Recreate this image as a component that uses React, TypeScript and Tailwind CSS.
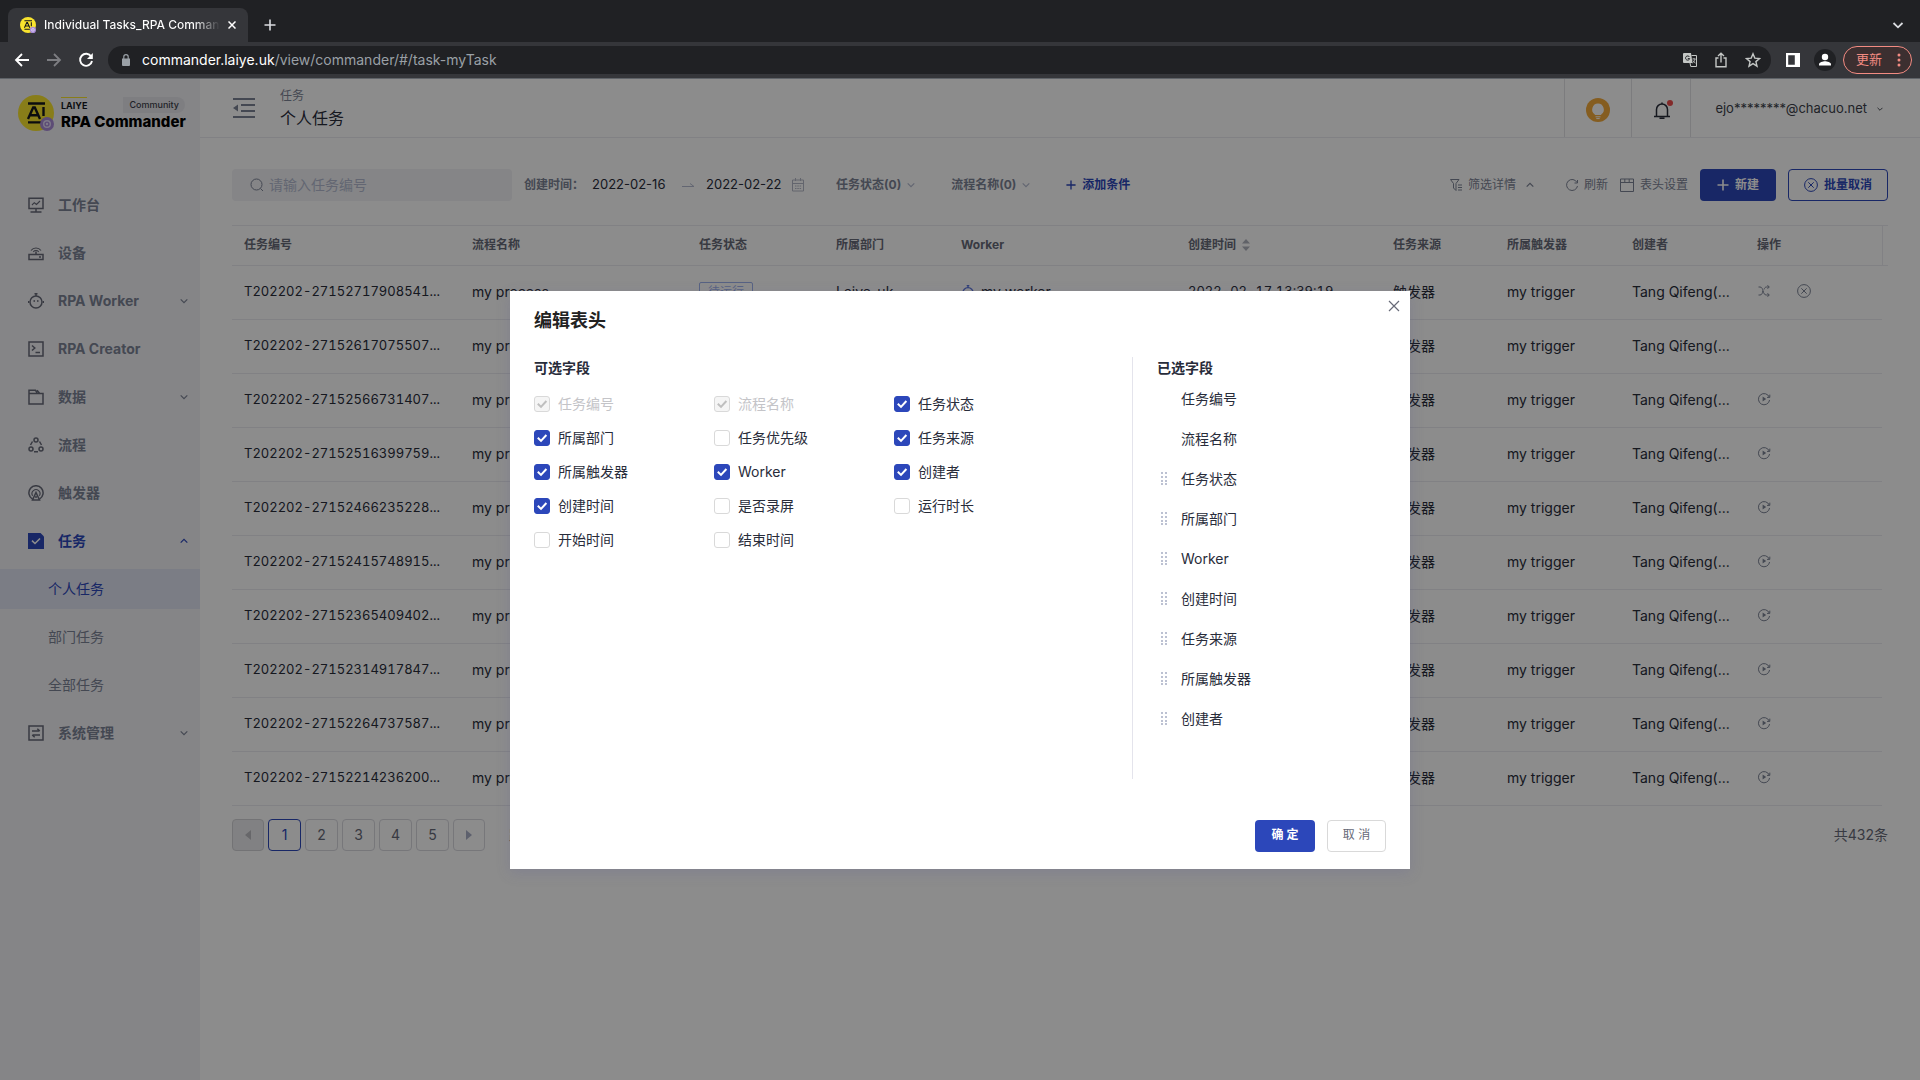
import React from "react";

type IconProps = { className?: string };

const Logo = ({ className }: IconProps) => (
  <svg viewBox="0 0 36 36" className={className} aria-hidden="true">
    <circle cx="18" cy="18" r="18" fill="#f8e32e" />
    <g stroke="#15171c" strokeWidth="2.4" fill="none">
      <path d="M10 8.500h17M10 27.400h13" />
      <path d="M10 24l5.200-11.500h1.600L22 24M12 20.200h8.500" />
      <path d="M25.500 12v9" />
    </g>
    <circle cx="29" cy="29" r="7" fill="#a98bd8" />
    <circle cx="29" cy="29" r="3.300" fill="none" stroke="#e6dcf8" strokeWidth="1.400" />
    <circle cx="29" cy="29" r="1.200" fill="#e6dcf8" />
  </svg>
);

const Chevron = ({ className, up }: IconProps & { up?: boolean }) => (
  <svg viewBox="0 0 8 8" className={className} fill="none" stroke="currentColor" strokeWidth="1.200" aria-hidden="true">
    <path d={up ? "M0.700 5.600L4 2.300l3.300 3.300" : "M0.700 2.400L4 5.700l3.300-3.300"} />
  </svg>
);

const Plus = ({ className }: IconProps) => (
  <svg viewBox="0 0 12 12" className={className} fill="none" stroke="currentColor" strokeWidth="1.600" aria-hidden="true">
    <path d="M6 0.500v11M0.500 6h11" />
  </svg>
);

const CircleX = ({ className }: IconProps) => (
  <svg viewBox="0 0 14 14" className={className} fill="none" stroke="currentColor" strokeWidth="1" aria-hidden="true">
    <circle cx="7" cy="7" r="6.400" />
    <path d="M4.300 4.300l5.400 5.400M9.700 4.300L4.300 9.700" />
  </svg>
);

const Replay = ({ className }: IconProps) => (
  <svg viewBox="0 0 14 14" className={className} fill="none" stroke="currentColor" strokeWidth="1" aria-hidden="true">
    <path d="M12.300 5.200A5.600 5.600 0 1 0 12.600 8" />
    <path d="M12.800 2.600v2.800H10" />
    <path d="M5.600 4.600v4.800L9.200 7z" fill="currentColor" stroke="none" />
  </svg>
);

const Shuffle = ({ className }: IconProps) => (
  <svg viewBox="0 0 14 14" className={className} fill="none" stroke="currentColor" strokeWidth="1" aria-hidden="true">
    <path d="M1.500 3H3c4 0 2 8 6.500 8H12M1.500 11H3c2 0 2.300-2 2.900-4M7 5.500C7.600 4 8.200 3 9.500 3H12" />
    <path d="M10.500 1.200L12.300 3l-1.800 1.800M10.500 9.200l1.800 1.800-1.800 1.800" />
  </svg>
);

const Bot = ({ className }: IconProps) => (
  <svg viewBox="0 0 16 16" className={className} fill="none" stroke="currentColor" strokeWidth="1.500" aria-hidden="true">
    <circle cx="8" cy="9" r="6" />
    <path d="M8 3V0.500M6.500 0.800h3M0.500 8v2M15.500 8v2" />
    <path d="M6.200 7v2M9.800 7v2" strokeWidth="1.200" />
  </svg>
);

const navIcons: Record<string, React.ReactNode> = {
  desk: (
    <>
      <path d="M1 1.200h14v10.300H1zM8 11.500v3M2.500 15h11" />
      <path d="M4 8l2.300-2.300L8.500 7.500 12 4" strokeWidth="1.100" />
    </>
  ),
  device: (
    <>
      <path d="M1 9.500h14v5H1z" />
      <path d="M11 12h2M8 9V6.500" />
      <path d="M3 5.500a6.200 6.200 0 0 1 10 0M5.300 6.800a3.500 3.500 0 0 1 5.400 0" strokeWidth="1.100" />
    </>
  ),
  creator: <path d="M1 1h14v14H1zM4 4.500L6.800 7 4 9.500M7.500 11.500H12" />,
  data: <path d="M1 15V1.200h6.500l1.800 3.300H15V15zM1 4.600h8M9 1.200l2.500 3" />,
  flow: (
    <>
      <circle cx="8" cy="3" r="2" />
      <circle cx="3" cy="12" r="2" />
      <circle cx="13" cy="12" r="2" />
      <path d="M4.500 4.500L2.500 8M11.500 4.500l2 3.500M6 14.800h4" />
    </>
  ),
  trigger: (
    <>
      <path d="M4.500 14A7.100 7.100 0 1 1 11.500 14" />
      <path d="M4.600 10.800a4 4 0 1 1 6.800 0" strokeWidth="1.100" />
      <path d="M8 7.500l3.500 7.500h-7zM8 11v2" />
    </>
  ),
  system: <path d="M1 1h14v14H1zM4 6h7.500M9.300 3.800L11.800 6M12 10H4.500M6.700 12.200L4.200 10" />,
};

const NavIcon = ({ name }: { name: string }) => {
  if (name === "bot") return <Bot className="size-4 shrink-0" />;
  if (name === "task")
    return (
      <svg viewBox="0 0 16 16" className="size-4 shrink-0" aria-hidden="true">
        <path d="M0 0h12.500L16 3.500V16H0z" fill="currentColor" />
        <path d="M4 7.600l3 2.900 5-5" fill="none" stroke="#fff" strokeWidth="1.600" />
      </svg>
    );
  return (
    <svg viewBox="0 0 16 16" className="size-4 shrink-0" fill="none" stroke="currentColor" strokeWidth="1.500" aria-hidden="true">
      {navIcons[name]}
    </svg>
  );
};

function BrowserChrome() {
  return (
    <header className="border-b border-[#5f6368] bg-[#35363a]">
      <div className="flex h-[42px] items-end bg-[#202124] pl-2">
        <div className="flex h-[34px] w-60 items-center rounded-t-lg bg-[#35363a] pl-3 pr-3">
          <Logo className="size-4 shrink-0" />
          <span className="ml-2 flex-1 overflow-hidden whitespace-nowrap bg-linear-to-r from-white from-85% to-transparent bg-clip-text text-xs font-medium text-transparent">
            Individual Tasks_RPA Commander
          </span>
          <button aria-label="Close tab" className="ml-2 text-white">
            <svg viewBox="0 0 8 8" className="size-2" stroke="currentColor" strokeWidth="1.500" aria-hidden="true">
              <path d="M0.500 0.500l7 7M7.500 0.500l-7 7" />
            </svg>
          </button>
        </div>
        <button aria-label="New tab" className="ml-4 flex h-[34px] items-center text-[#dadce0]">
          <Plus className="size-3" />
        </button>
        <button aria-label="Search tabs" className="ml-auto mr-4 flex h-[34px] items-center text-[#dadce0]">
          <svg viewBox="0 0 12 12" className="size-3" fill="none" stroke="currentColor" strokeWidth="1.800" aria-hidden="true">
            <path d="M1.500 4L6 8.300 10.500 4" />
          </svg>
        </button>
      </div>
      <div className="flex h-9 items-center pl-3.5 pr-2">
        <button aria-label="Back" className="text-white">
          <svg viewBox="0 0 16 16" className="size-4" fill="none" stroke="currentColor" strokeWidth="1.800" aria-hidden="true">
            <path d="M15 8H2M8 2L2 8l6 6" />
          </svg>
        </button>
        <button aria-label="Forward" className="ml-4 text-[#7d7e82]">
          <svg viewBox="0 0 16 16" className="size-4" fill="none" stroke="currentColor" strokeWidth="1.800" aria-hidden="true">
            <path d="M1 8h13M8 2l6 6-6 6" />
          </svg>
        </button>
        <button aria-label="Reload" className="ml-4 text-white">
          <svg viewBox="0 0 16 16" className="size-4" fill="none" stroke="currentColor" strokeWidth="1.900" aria-hidden="true">
            <path d="M13.200 4.600A6 6 0 1 0 14 9" />
            <path d="M14.800 1v6H9z" fill="currentColor" stroke="none" />
          </svg>
        </button>
        <div className="ml-3.5 flex h-7 flex-1 items-center rounded-full bg-[#202124] pl-3.5 pr-2.5">
          <svg viewBox="0 0 8 12" className="h-3 w-2" aria-hidden="true">
            <path d="M0 4.500h8V11a1 1 0 0 1-1 1H1a1 1 0 0 1-1-1z" fill="#9aa0a6" />
            <path d="M1.800 5V2.800a2.200 2.200 0 0 1 4.400 0V5" fill="none" stroke="#9aa0a6" strokeWidth="1.200" />
          </svg>
          <span className="ml-3 text-sm text-[#9aa0a6]">
            <span className="text-white">commander.laiye.uk</span>/view/commander/#/task-myTask
          </span>
          <div className="ml-auto flex items-center gap-[17px] text-[#c4c7c5]">
            <svg viewBox="0 0 14 14" className="size-3.5" aria-hidden="true">
              <path d="M1 0h7l1.500 10H1a1 1 0 0 1-1-1V1a1 1 0 0 1 1-1z" fill="currentColor" />
              <path d="M8.500 2.500h5v11H7.800L7 10" fill="none" stroke="currentColor" />
              <path d="M6.500 4A2.100 2.100 0 1 0 6.700 5.600H4.800" fill="none" stroke="#202124" />
              <path d="M9.300 6h3.400M11 5v1M12 6c-.4 2-1.400 3.200-2.600 4M9.900 7.500c.6 1.200 1.500 2 2.600 2.600" fill="none" stroke="currentColor" strokeWidth="0.800" />
            </svg>
            <svg viewBox="0 0 14 16" className="h-4 w-3.5" fill="none" stroke="currentColor" strokeWidth="1.400" aria-hidden="true">
              <path d="M4.500 6H2v8.800h10V6H9.500M7 10.500V1.500M4 4l3-2.800L10 4" />
            </svg>
            <svg viewBox="0 0 16 16" className="size-4" fill="none" stroke="currentColor" strokeWidth="1.400" aria-hidden="true">
              <path d="M8 1.800l1.800 4.300 4.700.4-3.600 3.100 1.100 4.600L8 11.700l-4 2.500 1.100-4.600L1.500 6.500l4.700-.4z" />
            </svg>
          </div>
        </div>
        <svg viewBox="0 0 14 14" className="ml-[15px] size-3.5" aria-hidden="true">
          <path d="M0 0h14v14H0zM2.200 2.200v9.600h6.600V2.200z" fill="#fff" fillRule="evenodd" />
        </svg>
        <svg viewBox="0 0 22 22" className="ml-3.5 size-[22px]" aria-hidden="true">
          <circle cx="11" cy="11" r="11" fill="#202124" />
          <circle cx="11" cy="8" r="3.200" fill="#fff" />
          <path d="M5 16.500v-1.300c0-2 4-3 6-3s6 1 6 3v1.300z" fill="#fff" />
        </svg>
        <button className="ml-[7px] flex h-7 w-[69px] items-center justify-between rounded-full border border-[#f28b82] bg-[#3c2f30] pl-3 pr-2.5 text-[13px] text-[#f28b82]">
          更新
          <svg viewBox="0 0 4 14" className="h-3.5 w-1" fill="currentColor" aria-hidden="true">
            <circle cx="2" cy="2" r="1.500" />
            <circle cx="2" cy="7" r="1.500" />
            <circle cx="2" cy="12" r="1.500" />
          </svg>
        </button>
      </div>
    </header>
  );
}

const navItems = [
  { icon: "desk", label: "工作台" },
  { icon: "device", label: "设备" },
  { icon: "bot", label: "RPA Worker", more: true },
  { icon: "creator", label: "RPA Creator" },
  { icon: "data", label: "数据", more: true },
  { icon: "flow", label: "流程" },
  { icon: "trigger", label: "触发器" },
  { icon: "task", label: "任务", more: true, children: ["个人任务", "部门任务", "全部任务"] },
  { icon: "system", label: "系统管理", more: true },
];

function Sidebar() {
  return (
    <aside className="w-[200px] shrink-0 bg-[#f2f2f6]">
      <div className="flex h-[58px] items-center gap-[7px] pl-[18px] pt-2.5">
        <Logo className="size-9 shrink-0" />
        <div className="w-[124px]">
          <div className="flex items-center justify-between">
            <span className="border-t border-[#f8e32e] text-[9px]/4 font-bold text-[#15171c]">LAIYE</span>
            <span className="rounded-l-sm rounded-r-full bg-[#e6e6ec] px-1.5 text-[9px]/4 font-medium text-[#3c3f4a]">
              Community
            </span>
          </div>
          <div className="whitespace-nowrap text-[15px]/4 font-extrabold text-black">RPA Commander</div>
        </div>
      </div>
      <nav className="mt-12 flex flex-col gap-2">
        {navItems.map((n) => (
          <React.Fragment key={n.label}>
            <a
              href="#"
              className={
                n.children
                  ? "flex h-10 items-center pl-7 pr-3 text-sm font-bold text-[#2c47ba]"
                  : "flex h-10 items-center pl-7 pr-3 text-sm font-bold text-[#7d8496]"
              }
            >
              <span className={n.children ? "flex" : "flex text-[#676a78]"}>
                <NavIcon name={n.icon} />
              </span>
              <span className="ml-3.5">{n.label}</span>
              {n.more && <Chevron up={!!n.children} className="ml-auto size-2" />}
            </a>
            {n.children?.map((c, i) => (
              <a
                key={c}
                href="#"
                className={
                  i === 0
                    ? "flex h-10 items-center bg-[#e1e4f2] pl-12 text-sm text-[#2c47ba]"
                    : "flex h-10 items-center pl-12 text-sm text-[#7d8496]"
                }
              >
                {c}
              </a>
            ))}
          </React.Fragment>
        ))}
      </nav>
    </aside>
  );
}

function TopBar() {
  return (
    <div className="flex h-[59px] border-b border-[#ececf0]">
      <button aria-label="收起菜单" className="ml-8 text-[#7d8496]">
        <svg viewBox="0 0 24 20" className="h-5 w-6" fill="none" stroke="currentColor" strokeWidth="1.800" aria-hidden="true">
          <path d="M1 1h22M9 7h14M9 13h14M1 19h22" />
          <path d="M1 10l5-3.500v7z" fill="currentColor" stroke="none" />
        </svg>
      </button>
      <div className="ml-6 flex flex-col pt-[9px]">
        <span className="text-xs/4 text-[#7d8496]">任务</span>
        <h1 className="mt-0.5 text-base/6 text-[#282c3a]">个人任务</h1>
      </div>
      <div className="ml-auto flex">
        <button aria-label="帮助" className="flex w-[67px] items-center justify-center border-l border-[#e2e2e6]">
          <svg viewBox="0 0 24 24" className="mt-1 size-6" aria-hidden="true">
            <circle cx="12" cy="12" r="12" fill="#f2a93b" />
            <path d="M12 5.500a6 6 0 0 0-3.400 10.800l.8 1.700h5.200l.8-1.700A6 6 0 0 0 12 5.500z" fill="#fff" />
            <path d="M9.500 18.800h5M10.300 20.600h3.400" stroke="#fff" strokeWidth="1" />
            <path d="M9 17.500h6" stroke="#f2a93b" strokeWidth="1" />
          </svg>
        </button>
        <button aria-label="通知" className="flex w-[59px] items-center justify-center border-l border-[#e2e2e6]">
          <svg viewBox="0 0 22 22" className="mt-1 ml-1 size-[22px]" aria-hidden="true">
            <path d="M4.500 17V10.500a5.500 5.500 0 0 1 11 0V17M2 17.500h16M7.500 19.200h5M10 5V3.500" fill="none" stroke="#282c3a" strokeWidth="1.500" />
            <circle cx="18" cy="4" r="3" fill="#ee4d4d" />
          </svg>
        </button>
        <button className="flex items-center gap-2.5 border-l border-[#e2e2e6] pl-6 pr-[37px] pt-0.5 text-[13px] text-[#3c3f4a]">
          ejo********@chacuo.net
          <Chevron className="size-1.5" />
        </button>
      </div>
    </div>
  );
}

function FilterBar() {
  return (
    <div className="flex h-8 items-center text-xs text-[#7d8496]">
      <label className="flex h-8 w-[280px] items-center rounded-sm bg-[#f2f2f6] pl-[18px]">
        <svg viewBox="0 0 14 14" className="size-3.5" fill="none" stroke="currentColor" aria-label="搜索">
          <circle cx="6.500" cy="6.500" r="5.500" />
          <path d="M10.500 10.500l2.500 2.500" />
        </svg>
        <input
          type="text"
          placeholder="请输入任务编号"
          className="ml-[5px] min-w-0 flex-1 bg-transparent text-sm outline-none placeholder:text-[#b4bbd0]"
        />
      </label>
      <label htmlFor="from" className="ml-3 font-bold">创建时间：</label>
      <input id="from" type="text" defaultValue="2022-02-16" className="ml-2 w-[78px] bg-transparent text-[13px] text-[#282c3a]" />
      <svg viewBox="0 0 12 12" className="ml-3 size-3" fill="none" stroke="#b4bbd0" aria-hidden="true">
        <path d="M0 7.500h12L8 4.500" />
      </svg>
      <input aria-label="结束日期" type="text" defaultValue="2022-02-22" className="ml-3 w-[78px] bg-transparent text-[13px] text-[#282c3a]" />
      <svg viewBox="0 0 12 14" className="ml-2 h-3.5 w-3" fill="none" stroke="#b4b8c6" aria-hidden="true">
        <path d="M0.500 2h11v11h-11zM0.500 5.500h11M3.500 0v3M8.500 0v3M3 8h1.500M5.300 8h1.500M7.600 8h1.500M3 10.500h1.500M5.300 10.500h1.500M7.600 10.500h1.500" />
      </svg>
      <button className="ml-8 flex items-center gap-1.5 font-bold">
        任务状态(0)
        <Chevron className="size-2 text-[#b4bbd0]" />
      </button>
      <button className="ml-9 flex items-center gap-1.5 font-bold">
        流程名称(0)
        <Chevron className="size-2 text-[#b4bbd0]" />
      </button>
      <button className="ml-9 flex items-center gap-1.5 font-bold text-[#2c47ba]">
        <Plus className="size-2.5" />
        添加条件
      </button>

      <button className="ml-auto flex items-center gap-1.5">
        <svg viewBox="0 0 12 12" className="size-3" fill="none" stroke="currentColor" aria-hidden="true">
          <path d="M0.500 0.500h8.500L6 4.500v7L3.500 9V4.500zM8 6h4M8 8.500h4M8 11h4" />
        </svg>
        筛选详情
        <Chevron up className="ml-1 size-2" />
      </button>
      <button className="ml-8 flex items-center gap-1.5">
        <svg viewBox="0 0 12 12" className="size-3" fill="none" stroke="currentColor" aria-hidden="true">
          <path d="M11 3.500A5.500 5.500 0 1 0 11.500 7M11.500 1v3h-3" />
        </svg>
        刷新
      </button>
      <button className="ml-3 flex items-center gap-1.5">
        <svg viewBox="0 0 14 14" className="size-3.5" fill="none" stroke="currentColor" aria-hidden="true">
          <path d="M0.500 1h13v12.500H0.500zM0.500 4.500h13M4.800 1v3.500M9.200 1v3.500" />
        </svg>
        表头设置
      </button>
      <button className="ml-3 flex h-8 w-[76px] items-center justify-center gap-1.5 rounded-sm bg-[#2c47ba] font-bold text-white">
        <Plus className="size-3" />
        新建
      </button>
      <button className="ml-3 flex h-8 w-[100px] items-center justify-center gap-1.5 rounded-sm border border-[#2c47ba] font-bold text-[#2c47ba]">
        <CircleX className="size-3.5" />
        批量取消
      </button>
    </div>
  );
}

const ids = [
  "27152717908541", "27152617075507", "27152566731407", "27152516399759", "27152466235228",
  "27152415748915", "27152365409402", "27152314917847", "27152264737587", "27152214236200",
];

const heads = ["任务编号", "流程名称", "任务状态", "所属部门", "Worker", "创建时间", "任务来源", "所属触发器", "创建者", "操作"];

function TaskTable() {
  const cell = "border-b border-[#ececf0] px-3 pb-0.5 whitespace-nowrap";
  const numeric = "border-b border-[#ececf0] px-3 pb-0.5 whitespace-nowrap text-[13px] tabular-nums";
  return (
    <table className="mt-6 w-full table-fixed border-separate border-spacing-0 border-t border-[#ececf0] text-left">
      <colgroup>
        <col className="w-[228px]" />
        <col className="w-[227px]" />
        <col className="w-[137px]" />
        <col className="w-[125px]" />
        <col className="w-[227px]" />
        <col className="w-[205px]" />
        <col className="w-[114px]" />
        <col className="w-[125px]" />
        <col className="w-[125px]" />
        <col className="w-[137px]" />
        <col className="w-[6px]" />
      </colgroup>
      <thead>
        <tr className="h-10 text-xs text-[#676a78]">
          {heads.map((h) => (
            <th key={h} className="border-b border-[#ececf0] px-3 pb-0.5 font-bold">
              {h === "创建时间" ? (
                <span className="flex items-center gap-1.5">
                  {h}
                  <svg viewBox="0 0 8 14" className="h-3.5 w-2" fill="#b0b3bd" aria-hidden="true">
                    <path d="M0 5.500l4-4.500 4 4.500zM0 8.500l4 4.500 4-4.500z" />
                  </svg>
                </span>
              ) : (
                h
              )}
            </th>
          ))}
          <td className="border-b border-l border-[#ececf0] p-0" />
        </tr>
      </thead>
      <tbody className="text-sm text-[#282c3a]">
        {ids.map((id, i) => (
          <tr key={id} className="h-[54px]">
            <td className={numeric}>T202202-{id}...</td>
            <td className={cell}>my process</td>
            <td className={cell}>
              <span className="inline-flex h-5 items-center rounded-xs border border-[#9fb2ee] px-2 text-xs text-[#9fb2ee]">
                {i === 0 ? "待运行" : "已取消"}
              </span>
            </td>
            <td className={cell}>Laiye-uk</td>
            <td className={cell}>
              <span className="flex items-center gap-1.5">
                <Bot className="size-3.5 text-[#5a74dc]" />
                my worker
              </span>
            </td>
            <td className={numeric}>2022-02-17 13:39:19</td>
            <td className={cell}>触发器</td>
            <td className={cell}>my trigger</td>
            <td className={cell}>Tang Qifeng(...</td>
            <td className={cell}>
              <span className="flex items-center gap-[26px] pb-0.5 text-[#7d8496]">
                {i === 0 && (
                  <>
                    <button aria-label="调度"><Shuffle className="size-3.5" /></button>
                    <button aria-label="取消"><CircleX className="size-3.5" /></button>
                  </>
                )}
                {i > 1 && (
                  <button aria-label="重新运行"><Replay className="size-3.5" /></button>
                )}
              </span>
            </td>
            <td className="p-0" />
          </tr>
        ))}
      </tbody>
    </table>
  );
}

function Pagination() {
  return (
    <div className="mt-[13px] flex items-center gap-1 text-sm text-[#676a78]">
      <button aria-label="上一页" className="flex size-8 items-center justify-center rounded-sm border border-[#d2d2d6] bg-[#ececee]">
        <svg viewBox="0 0 6 10" className="h-2.5 w-1.5" fill="#bcbcc2" aria-hidden="true">
          <path d="M6 0v10L0 5z" />
        </svg>
      </button>
      <button className="h-8 w-[33px] rounded-sm border border-[#2c47ba] text-[#2c47ba]">1</button>
      {["2", "3", "4", "5"].map((p) => (
        <button key={p} className="h-8 w-[33px] rounded-sm border border-[#d9d9de]">
          {p}
        </button>
      ))}
      <button aria-label="下一页" className="flex size-8 items-center justify-center rounded-sm border border-[#d9d9de]">
        <svg viewBox="0 0 6 10" className="h-2.5 w-1.5" fill="#a9b0c6" aria-hidden="true">
          <path d="M0 0v10l6-5z" />
        </svg>
      </button>
      <span className="ml-5">跳至</span>
      <span className="ml-auto">共432条</span>
    </div>
  );
}

const fields: { label: string; checked?: boolean; disabled?: boolean }[] = [
  { label: "任务编号", checked: true, disabled: true },
  { label: "流程名称", checked: true, disabled: true },
  { label: "任务状态", checked: true },
  { label: "所属部门", checked: true },
  { label: "任务优先级" },
  { label: "任务来源", checked: true },
  { label: "所属触发器", checked: true },
  { label: "Worker", checked: true },
  { label: "创建者", checked: true },
  { label: "创建时间", checked: true },
  { label: "是否录屏" },
  { label: "运行时长" },
  { label: "开始时间" },
  { label: "结束时间" },
];

const chosen = ["任务编号", "流程名称", "任务状态", "所属部门", "Worker", "创建时间", "任务来源", "所属触发器", "创建者"];

function HeaderDialog() {
  return (
    <div
      role="dialog"
      aria-labelledby="dialog-title"
      className="mt-[212px] flex w-[900px] flex-col self-start bg-white px-6 pb-[17px] text-sm text-[#282c3a] shadow-[0_4px_12px_rgba(100,100,150,0.25)]"
    >
      <div className="flex items-start justify-between pt-4">
        <h2 id="dialog-title" className="text-lg/7 font-bold text-[#222222]">编辑表头</h2>
        <button aria-label="关闭" className="-mr-3.5 -mt-[7px] text-[#676a78]">
          <svg viewBox="0 0 12 12" className="size-3" stroke="currentColor" strokeWidth="1.200" aria-hidden="true">
            <path d="M1 1l10 10M11 1L1 11" />
          </svg>
        </button>
      </div>
      <div className="mt-[22px] flex h-[422px]">
        <section className="flex-1">
          <h3 className="font-bold leading-[22px]">可选字段</h3>
          <div className="mt-2 grid grid-cols-[180px_180px_180px]">
            {fields.map((f) => (
              <label
                key={f.label}
                className={f.disabled ? "flex h-[34px] items-center gap-2 text-[#c4c4c8]" : "flex h-[34px] items-center gap-2"}
              >
                <span className="grid">
                  <input
                    type="checkbox"
                    defaultChecked={f.checked}
                    disabled={f.disabled}
                    className="peer col-start-1 row-start-1 size-4 appearance-none rounded-[3px] border border-[#d9d9d9] bg-white checked:border-[#2c47ba] checked:bg-[#2c47ba] disabled:border-[#d9d9d9] disabled:bg-[#f5f5f5]"
                  />
                  <svg
                    viewBox="0 0 16 16"
                    className="pointer-events-none col-start-1 row-start-1 hidden size-4 text-white peer-checked:block peer-disabled:text-[#bfbfbf]"
                    fill="none"
                    stroke="currentColor"
                    strokeWidth="2"
                    aria-hidden="true"
                  >
                    <path d="M3.800 7.700L7 10.900l5.400-5.900" />
                  </svg>
                </span>
                {f.label}
              </label>
            ))}
          </div>
        </section>
        <section className="w-[254px] border-l border-[#e4e4ec] pl-6">
          <h3 className="font-bold leading-[22px]">已选字段</h3>
          <ul className="mt-0.5">
            {chosen.map((c, i) => (
              <li key={c} className="flex h-10 items-center pb-1">
                <span className="flex w-6 pb-0.5 pl-1">
                  {i > 1 && (
                    <svg viewBox="0 0 6 13" className="h-[13px] w-1.5" fill="#bcc1d2" aria-hidden="true">
                      {[0, 4, 8, 11].map((y) => (
                        <path key={y} d={`M0 ${y}h2v2H0zM4 ${y}h2v2H4z`} />
                      ))}
                    </svg>
                  )}
                </span>
                {c}
              </li>
            ))}
          </ul>
        </section>
      </div>
      <div className="mt-[41px] flex justify-end gap-3 text-xs">
        <button className="h-8 w-[60px] rounded-sm bg-[#2c47ba] pb-0.5 font-bold text-white">确 定</button>
        <button className="h-8 w-[59px] rounded-sm border border-[#d9d9d9] pb-0.5 text-[#676a78]">取 消</button>
      </div>
    </div>
  );
}

export default function App() {
  return (
    <div className="flex min-h-screen flex-col bg-white font-['Inter','Noto_Sans_CJK_SC',sans-serif]">
      <BrowserChrome />
      <div className="relative flex flex-1">
        <Sidebar />
        <main className="min-w-0 flex-1">
          <TopBar />
          <div className="px-8 pt-[31px]">
            <FilterBar />
            <TaskTable />
            <Pagination />
          </div>
        </main>
        <div className="absolute inset-0 flex justify-center bg-black/45">
          <HeaderDialog />
        </div>
      </div>
    </div>
  );
}
